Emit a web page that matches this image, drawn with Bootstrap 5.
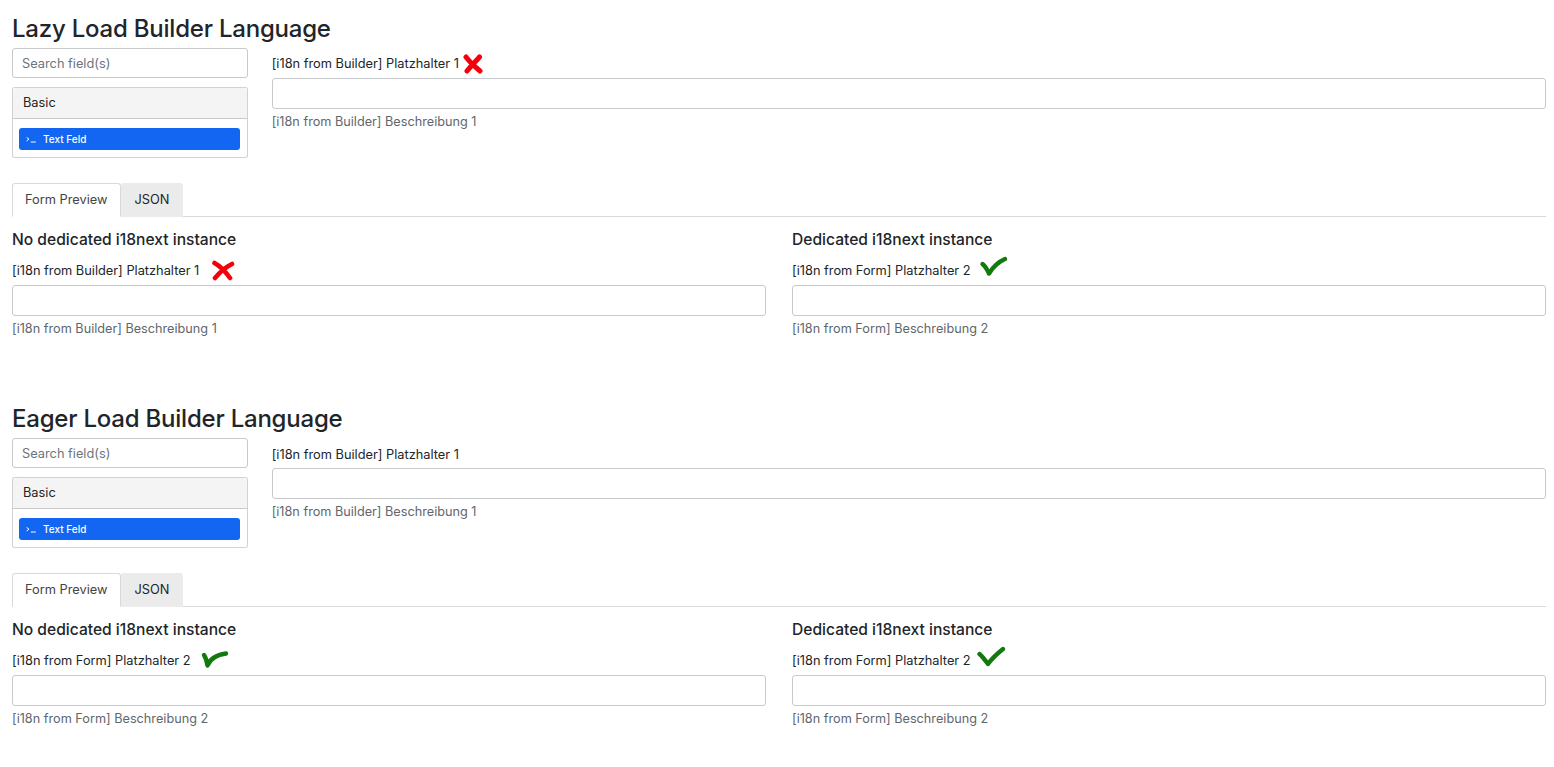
<!DOCTYPE html>
<html lang="en">
<head>
<meta charset="utf-8">
<title>i18n</title>
<link href="https://cdn.jsdelivr.net/npm/bootstrap@5.3.0/dist/css/bootstrap.min.css" rel="stylesheet">
<style>
body { font-family: Inter, "Liberation Sans", sans-serif; font-size: 12.8px; color: #212529; background: #fff; }
.page-wrap { padding: 0 8px 0 12px; }
.section-block { height: 390.4px; }
.sec-title { font-size: 24px; font-weight: 500; line-height: 29px; margin: 0; padding-top: 14px; height: 48px; letter-spacing: -.22px; }
.search-box { height: 30px; font-size: 12.8px; padding: 0 9px; border-radius: 3px; border-color: #c8c9cc; }
.search-box::placeholder { color: #6c757d; opacity: 1; }
.field-card { margin-top: 9px; height: 71px; border-radius: 3px; font-size: 12.8px; }
.field-card .card-header { height: 32px; padding: 0 10px; line-height: 30px; background: #f4f4f4; }
.field-card .card-body { padding: 9px 7px 9px 6px; }
.field-btn { height: 22px; display: flex; align-items: center; gap: 7px; padding: 0 7px; background: #1266f1; color: #fff; border-radius: 3px; font-size: 10px; font-weight: 500; }
.lbl { height: 30px; display: flex; align-items: center; margin: 0; padding-top: 2px; font-size: 12.8px; }
.lbl-sm { height: 31px; padding-top: 2px; }
.txt { height: 31px; border-radius: 3px; border-color: #c8c9cc; }
.help { font-size: 12.7px; color: #5f666d; line-height: 20px; margin-top: 3px; }
.tabs-area { margin-top: 25px; height: 34px; border-color: #d8d9db; }
.tabs-area .nav-link { height: 34px; padding: 0 12px; line-height: 32px; font-size: 12.8px; color: #333; border-radius: 3px 3px 0 0; }
.tabs-area .nav-link.active { color: #444; border-color: #d8d9db #d8d9db #fff; }
.tabs-area .nav-item + .nav-item .nav-link { background: #ebebeb; color: #212529; padding: 0 13px; }
.pane-title { font-size: 15.6px; font-weight: 500; line-height: 20px; margin: 13px 0 0; height: 24px; }
.pane-left { padding-right: 13px; }
.pane-right { padding-left: 13px; }
.mark-svg { flex: none; }
.mk-x1 { margin-left: 4px; }
.mk-x2 { margin-left: 12px; margin-bottom: 2px; }
.mk-c1 { margin-left: 8px; margin-bottom: 8px; }
.mk-c2 { margin-left: 9px; margin-bottom: 2px; }
.mk-c3 { margin-left: 5px; margin-bottom: 8px; }
</style>
</head>
<body>
<div class="page-wrap">

<section class="section-block">
  <h1 class="sec-title">Lazy Load Builder Language</h1>
  <div class="row">
    <div class="col-2">
      <input class="form-control search-box" type="text" placeholder="Search field(s)">
      <div class="card field-card">
        <div class="card-header">Basic</div>
        <div class="card-body">
          <div class="field-btn"><svg width="10" height="7" viewBox="0 0 10 7"><path d="M.6 1.4 3 3.2.6 5M4.8 6H9.8" fill="none" stroke="#fff" stroke-width="1"/></svg>Text Feld</div>
        </div>
      </div>
    </div>
    <div class="col-10">
      <label class="lbl">[i18n from Builder] Platzhalter 1
        <svg class="mark-svg mk-x1" width="20" height="22" viewBox="0 0 20 22"><path d="M3 4C6 8 11 13 17 18M16.500 4C13 8 8 13 4 18" fill="none" stroke="#f4000c" stroke-width="5" stroke-linecap="round"/></svg>
      </label>
      <input class="form-control txt" type="text">
      <div class="help">[i18n from Builder] Beschreibung 1</div>
    </div>
  </div>
  <ul class="nav nav-tabs tabs-area">
    <li class="nav-item"><a class="nav-link active" href="#">Form Preview</a></li>
    <li class="nav-item"><a class="nav-link" href="#">JSON</a></li>
  </ul>
  <div class="row">
    <div class="col-6 pane-left">
      <h5 class="pane-title">No dedicated i18next instance</h5>
      <label class="lbl lbl-sm">[i18n from Builder] Platzhalter 1
        <svg class="mark-svg mk-x2" width="24" height="22" viewBox="0 0 24 22"><path d="M3.500 4C9 7 14 12 19 19M21 5C15 8 9 13 4 19" fill="none" stroke="#f4000c" stroke-width="4.600" stroke-linecap="round"/></svg>
      </label>
      <input class="form-control txt" type="text">
      <div class="help">[i18n from Builder] Beschreibung 1</div>
    </div>
    <div class="col-6 pane-right">
      <h5 class="pane-title">Dedicated i18next instance</h5>
      <label class="lbl lbl-sm">[i18n from Form] Platzhalter 2
        <svg class="mark-svg mk-c1" width="30" height="22" viewBox="0 0 30 22"><path d="M3.500 8C6 10 8 13 10 17.500C14 11 19 6 26 3" fill="none" stroke="#127a0c" stroke-width="4.400" stroke-linecap="round" stroke-linejoin="round"/></svg>
      </label>
      <input class="form-control txt" type="text">
      <div class="help">[i18n from Form] Beschreibung 2</div>
    </div>
  </div>
</section>

<section class="section-block">
  <h1 class="sec-title">Eager Load Builder Language</h1>
  <div class="row">
    <div class="col-2">
      <input class="form-control search-box" type="text" placeholder="Search field(s)">
      <div class="card field-card">
        <div class="card-header">Basic</div>
        <div class="card-body">
          <div class="field-btn"><svg width="10" height="7" viewBox="0 0 10 7"><path d="M.6 1.4 3 3.2.6 5M4.8 6H9.8" fill="none" stroke="#fff" stroke-width="1"/></svg>Text Feld</div>
        </div>
      </div>
    </div>
    <div class="col-10">
      <label class="lbl">[i18n from Builder] Platzhalter 1</label>
      <input class="form-control txt" type="text">
      <div class="help">[i18n from Builder] Beschreibung 1</div>
    </div>
  </div>
  <ul class="nav nav-tabs tabs-area">
    <li class="nav-item"><a class="nav-link active" href="#">Form Preview</a></li>
    <li class="nav-item"><a class="nav-link" href="#">JSON</a></li>
  </ul>
  <div class="row">
    <div class="col-6 pane-left">
      <h5 class="pane-title">No dedicated i18next instance</h5>
      <label class="lbl lbl-sm">[i18n from Form] Platzhalter 2
        <svg class="mark-svg mk-c2" width="30" height="20" viewBox="0 0 30 20"><path d="M4 5C6 8 7 12 7.500 15.500C10 9 15 5 26 3.500" fill="none" stroke="#127a0c" stroke-width="4.400" stroke-linecap="round" stroke-linejoin="round"/></svg>
      </label>
      <input class="form-control txt" type="text">
      <div class="help">[i18n from Form] Beschreibung 2</div>
    </div>
    <div class="col-6 pane-right">
      <h5 class="pane-title">Dedicated i18next instance</h5>
      <label class="lbl lbl-sm">[i18n from Form] Platzhalter 2
        <svg class="mark-svg mk-c3" width="30" height="22" viewBox="0 0 30 22"><path d="M3.500 8C6 10 9 14 12 18C17 11 22 7 27 3" fill="none" stroke="#127a0c" stroke-width="4.400" stroke-linecap="round" stroke-linejoin="round"/></svg>
      </label>
      <input class="form-control txt" type="text">
      <div class="help">[i18n from Form] Beschreibung 2</div>
    </div>
  </div>
</section>

</div>
</body>
</html>
